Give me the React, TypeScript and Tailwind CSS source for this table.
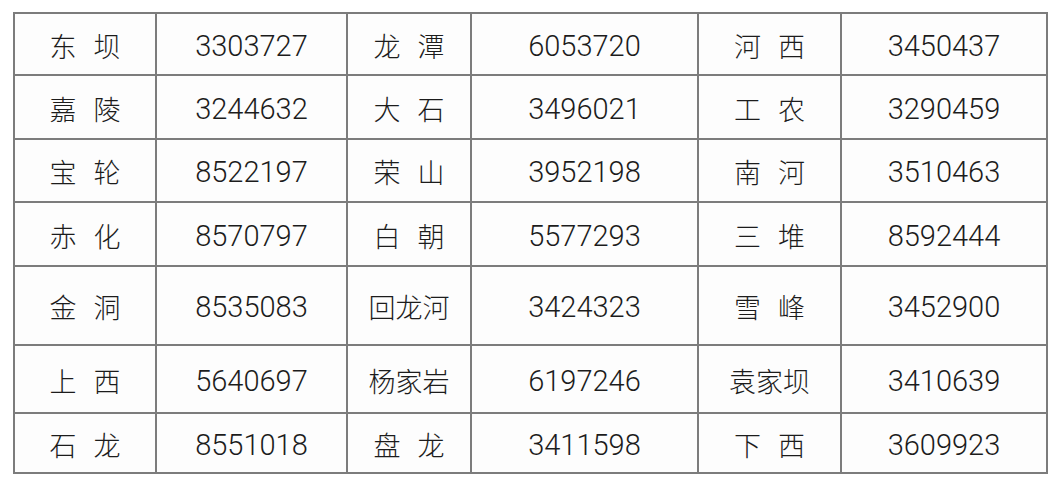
import React from "react";

const rows: [string, string, string, string, string, string][] = [
  ["东坝", "3303727", "龙潭", "6053720", "河西", "3450437"],
  ["嘉陵", "3244632", "大石", "3496021", "工农", "3290459"],
  ["宝轮", "8522197", "荣山", "3952198", "南河", "3510463"],
  ["赤化", "8570797", "白朝", "5577293", "三堆", "8592444"],
  ["金洞", "8535083", "回龙河", "3424323", "雪峰", "3452900"],
  ["上西", "5640697", "杨家岩", "6197246", "袁家坝", "3410639"],
  ["石龙", "8551018", "盘龙", "3411598", "下西", "3609923"],
];

const heights = [60, 62, 61, 62, 77, 66, 58];

function Name({ text }: { text: string }) {
  const chars = Array.from(text);
  if (chars.length === 2) {
    return (
      <span className="flex">
        <span>{chars[0]}</span>
        <span className="ml-[17px]">{chars[1]}</span>
      </span>
    );
  }
  return <span>{text}</span>;
}

export default function App() {
  return (
    <div className="w-[1056px] h-[484px] bg-white pt-[12px] pl-[13px]">
      <div
        className="grid gap-[2px] p-[2px] bg-[#7c7c7c] w-[1035px]"
        style={{ gridTemplateColumns: "140px 189px 122px 225px 141px 204px" }}
      >
        {rows.map((r, i) =>
          r.map((cell, j) => (
            <div
              key={`${i}-${j}`}
              className={`bg-[#fdfdfd] flex items-center justify-center text-[#1c1c1c] ${
                j % 2 === 0
                  ? "pt-[4px] text-[27px] font-light font-['Noto_Sans_CJK_SC',sans-serif]"
                  : "pt-[5px] text-[29px] font-light font-['Roboto',sans-serif]"
              }`}
              style={{ height: heights[i] }}
            >
              {j % 2 === 0 ? <Name text={cell} /> : cell}
            </div>
          ))
        )}
      </div>
    </div>
  );
}
